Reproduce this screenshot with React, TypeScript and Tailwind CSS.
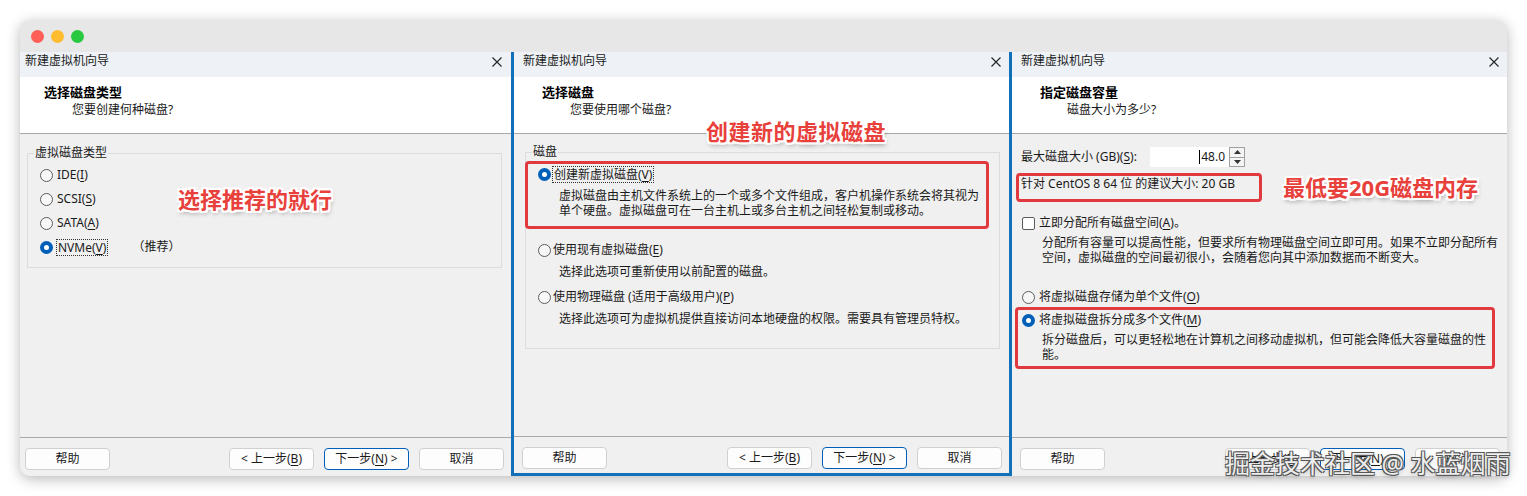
import React from "react";

const annot =
  "absolute whitespace-nowrap font-bold text-[22px] leading-[26px] text-[#e8403b] [text-shadow:-2px_-2px_0_#fff,2px_-2px_0_#fff,-2px_2px_0_#fff,2px_2px_0_#fff,0_2px_0_#fff,0_-2px_0_#fff,2px_0_0_#fff,-2px_0_0_#fff,1px_3px_5px_rgba(0,0,0,0.4)]";

function Radio({ checked }: { checked?: boolean }) {
  return checked ? (
    <span className="flex h-[13px] w-[13px] shrink-0 items-center justify-center rounded-full bg-[#005fb8]">
      <span className="h-[5px] w-[5px] rounded-full bg-white" />
    </span>
  ) : (
    <span className="h-[13px] w-[13px] shrink-0 rounded-full border border-[#5c5c5c] bg-[#f7f7f7]" />
  );
}

function U({ children }: { children: React.ReactNode }) {
  return <span className="underline decoration-1 underline-offset-[2px]">{children}</span>;
}

function Close() {
  return (
    <svg width="10" height="10" viewBox="0 0 10 10" className="shrink-0">
      <path d="M0.5 0.5 L9.5 9.5 M9.5 0.5 L0.5 9.5" stroke="#222" strokeWidth="1.1" fill="none" />
    </svg>
  );
}

function Btn({ children, primary }: { children: React.ReactNode; primary?: boolean }) {
  return (
    <button
      className={
        primary
          ? "flex h-[22px] w-[85px] items-center justify-center rounded-[4px] border border-[#005fb8] bg-[#fdfdfd] text-[12px] leading-none text-[#1a1a1a]"
          : "flex h-[22px] w-[85px] items-center justify-center rounded-[4px] border border-[#d0d0d0] bg-[#fdfdfd] text-[12px] leading-none text-[#1a1a1a]"
      }
    >
      {children}
    </button>
  );
}

function Footer({ className }: { className: string }) {
  return (
    <div className={className}>
      <Btn>帮助</Btn>
      <div className="ml-auto flex gap-[10px]">
        <Btn>
          &lt; 上一步(<U>B</U>)
        </Btn>
        <Btn primary>
          下一步(<U>N</U>) &gt;
        </Btn>
        <Btn>取消</Btn>
      </div>
    </div>
  );
}

function Top({
  headerCls,
  titleCls,
  subCls,
  title,
  subtitle,
}: {
  headerCls: string;
  titleCls: string;
  subCls: string;
  title: string;
  subtitle: string;
}) {
  return (
    <>
      <div className={headerCls}>
        <span className="text-[12px] leading-[16px] text-[#1a1a1a]">新建虚拟机向导</span>
        <Close />
      </div>
      <div className="h-[57px] shrink-0 border-b border-[#a8a8a8] bg-white pt-[6px]">
        <div className={titleCls}>{title}</div>
        <div className={subCls}>{subtitle}</div>
      </div>
    </>
  );
}

export default function App() {
  return (
    <div className="relative h-[496px] w-[1527px] bg-white pl-[20px] pt-[20px] font-['Noto_Sans','Noto_Sans_CJK_SC',sans-serif] text-[12px] text-[#1a1a1a]">
      <div className="flex h-[456px] w-[1487px] flex-col overflow-hidden rounded-[10px] bg-[#e7e7e7] shadow-[0_3px_14px_rgba(0,0,0,0.28)]">
        {/* title bar */}
        <div className="flex h-[32px] shrink-0 items-center gap-[7px] pl-[11px]">
          <span className="h-[13px] w-[13px] rounded-full bg-[#ff5f57]" />
          <span className="h-[13px] w-[13px] rounded-full bg-[#febc2e]" />
          <span className="h-[13px] w-[13px] rounded-full bg-[#28c840]" />
        </div>

        <div className="flex flex-1">
          {/* Panel 1 */}
          <div className="relative flex w-[491px] flex-col bg-[#f0f0f0]">
            <Top
              headerCls="flex h-[25px] shrink-0 items-start justify-between bg-[#eef2f7] pl-[5px] pr-[9px] pt-[1px] [&>svg]:mt-[4px]"
              titleCls="pl-[24px] text-[13px] font-bold leading-[18px] text-black"
              subCls="mt-[1px] pl-[52px] text-[12px] leading-[16px]"
              title="选择磁盘类型"
              subtitle="您要创建何种磁盘?"
            />
            <div className="flex-1 px-[9px] pl-[7px] pt-[11px]">
              <fieldset className="border border-[#dcdcdc] px-0 pb-[8px] pl-[12px]">
                <legend className="-ml-[6px] px-[1px] text-[12px] leading-[16px]">虚拟磁盘类型</legend>
                <div className="pt-[2px]">
                  <div className="flex h-[24px] items-center gap-[4px]">
                    <Radio />
                    <span>
                      IDE(<U>I</U>)
                    </span>
                  </div>
                  <div className="flex h-[24px] items-center gap-[4px]">
                    <Radio />
                    <span>
                      SCSI(<U>S</U>)
                    </span>
                  </div>
                  <div className="flex h-[24px] items-center gap-[4px]">
                    <Radio />
                    <span>
                      SATA(<U>A</U>)
                    </span>
                  </div>
                  <div className="flex h-[24px] items-center gap-[3px]">
                    <Radio checked />
                    <span className="border border-dotted border-[#333] px-[1px] leading-[15px]">
                      NVMe(<U>V</U>)
                    </span>
                    <span className="ml-[21px]">（推荐）</span>
                  </div>
                </div>
              </fieldset>
            </div>
            <Footer className="flex h-[39px] shrink-0 items-start border-t border-[#a8a8a8] pl-[5px] pr-[7px] pt-[10px]" />
            <div className={`${annot} left-[158px] top-[134px]`}>选择推荐的就行</div>
          </div>

          {/* Panel 2 */}
          <div className="relative flex w-[501px] flex-col border-x-[3px] border-b-[3px] border-[#1170b8] bg-[#f0f0f0]">
            <Top
              headerCls="flex h-[25px] shrink-0 items-start justify-between bg-[#eef2f7] pl-[9px] pr-[8px] pt-[1px] [&>svg]:mt-[4px]"
              titleCls="pl-[28px] text-[13px] font-bold leading-[18px] text-black"
              subCls="mt-[1px] pl-[56px] text-[12px] leading-[16px]"
              title="选择磁盘"
              subtitle="您要使用哪个磁盘?"
            />
            <div className="flex-1 pl-[11px] pr-[9px] pt-[10px]">
              <fieldset className="border border-[#dcdcdc] px-0 pb-[22px]">
                <legend className="ml-[6px] px-[1px] text-[12px] leading-[16px]">磁盘</legend>
                <div className="-ml-[1px] mr-[10px] mt-[1px] rounded-[4px] border-[3px] border-[#e0393e] pb-[8px] pl-[10px]">
                  <div className="flex h-[20px] items-center gap-[1px]">
                    <Radio checked />
                    <span className="border border-dotted border-[#333] px-[1px] leading-[15px]">
                      创建新虚拟磁盘(<U>V</U>)
                    </span>
                  </div>
                  <div className="mt-[4px] whitespace-nowrap pl-[21px] leading-[15px]">
                    虚拟磁盘由主机文件系统上的一个或多个文件组成，客户机操作系统会将其视为
                    <br />
                    单个硬盘。虚拟磁盘可在一台主机上或多台主机之间轻松复制或移动。
                  </div>
                </div>
                <div className="pl-[12px]">
                  <div className="mt-[11px] flex h-[20px] items-center gap-[2px]">
                    <Radio />
                    <span>
                      使用现有虚拟磁盘(<U>E</U>)
                    </span>
                  </div>
                  <div className="mt-[4px] pl-[21px] leading-[15px]">选择此选项可重新使用以前配置的磁盘。</div>
                  <div className="mt-[8px] flex h-[20px] items-center gap-[2px]">
                    <Radio />
                    <span>
                      使用物理磁盘 (适用于高级用户)(<U>P</U>)
                    </span>
                  </div>
                  <div className="mt-[4px] pl-[21px] leading-[15px]">
                    选择此选项可为虚拟机提供直接访问本地硬盘的权限。需要具有管理员特权。
                  </div>
                </div>
              </fieldset>
            </div>
            <Footer className="flex h-[37px] shrink-0 items-start border-t border-[#a8a8a8] pl-[8px] pr-[7px] pt-[10px]" />
            <div className={`${annot} left-[192px] top-[66px] tracking-[0.5px]`}>创建新的虚拟磁盘</div>
          </div>

          {/* Panel 3 */}
          <div className="relative flex w-[495px] flex-col bg-[#f0f0f0]">
            <Top
              headerCls="flex h-[25px] shrink-0 items-start justify-between bg-[#eef2f7] pl-[9px] pr-[8px] pt-[1px] [&>svg]:mt-[4px]"
              titleCls="pl-[28px] text-[13px] font-bold leading-[18px] text-black"
              subCls="mt-[1px] pl-[55px] text-[12px] leading-[16px]"
              title="指定磁盘容量"
              subtitle="磁盘大小为多少?"
            />
            <div className="flex-1 pt-[13px]">
              <div className="flex h-[20px] items-center pl-[9px]">
                <span className="w-[129px] whitespace-nowrap">
                  最大磁盘大小 (GB)(<U>S</U>):
                </span>
                <div className="flex h-[20px] w-[79px] items-center justify-end bg-white pr-[4px]">
                  <span className="mr-[1px] h-[14px] w-px bg-black" />
                  <span>48.0</span>
                </div>
                <div className="flex h-[20px] w-[16px] flex-col border border-[#a0a0a0] bg-[#f4f4f4]">
                  <div className="flex flex-1 items-center justify-center border-b border-[#a0a0a0]">
                    <svg width="7" height="4" viewBox="0 0 7 4">
                      <path d="M0 4 L3.5 0 L7 4 Z" fill="#333" />
                    </svg>
                  </div>
                  <div className="flex flex-1 items-center justify-center">
                    <svg width="7" height="4" viewBox="0 0 7 4">
                      <path d="M0 0 L3.5 4 L7 0 Z" fill="#333" />
                    </svg>
                  </div>
                </div>
              </div>
              <div className="ml-[4px] mt-[6px] h-[29px] w-[246px] rounded-[4px] border-[3px] border-[#e0393e] pl-[2px] leading-[16px]">
                针对 CentOS 8 64 位 的建议大小: 20 GB
              </div>
              <div className="mt-[11px] flex h-[20px] items-center gap-[4px] pl-[10px]">
                <span className="h-[13px] w-[13px] rounded-[2px] border border-[#5c5c5c] bg-white" />
                <span>
                  立即分配所有磁盘空间(<U>A</U>)。
                </span>
              </div>
              <div className="mt-[2px] whitespace-nowrap pl-[30px] leading-[15px]">
                分配所有容量可以提高性能，但要求所有物理磁盘空间立即可用。如果不立即分配所有
                <br />
                空间，虚拟磁盘的空间最初很小，会随着您向其中添加数据而不断变大。
              </div>
              <div className="mt-[22px] flex h-[20px] items-center gap-[4px] pl-[10px]">
                <Radio />
                <span>
                  将虚拟磁盘存储为单个文件(<U>O</U>)
                </span>
              </div>
              <div className="ml-[3px] w-[480px] rounded-[4px] border-[3px] border-[#e0393e] pb-[4px] pl-[4px]">
                <div className="flex h-[20px] items-center gap-[4px]">
                  <Radio checked />
                  <span>
                    将虚拟磁盘拆分成多个文件(<U>M</U>)
                  </span>
                </div>
                <div className="mt-[2px] whitespace-nowrap pl-[20px] leading-[15px]">
                  拆分磁盘后，可以更轻松地在计算机之间移动虚拟机，但可能会降低大容量磁盘的性
                  <br />
                  能。
                </div>
              </div>
            </div>
            <Footer className="flex h-[39px] shrink-0 items-start border-t border-[#a8a8a8] pl-[8px] pr-[7px] pt-[10px]" />
            <div className={`${annot} left-[271px] top-[122px]`}>最低要20G磁盘内存</div>
          </div>
        </div>
      </div>

      <div className="absolute left-[1225px] top-[448px] whitespace-nowrap text-[25px] leading-[30px] text-white/90 [text-shadow:-1px_-1px_0_#555,1px_-1px_0_#555,-1px_1px_0_#555,1px_1px_0_#555,0_2px_4px_rgba(0,0,0,0.3)]">
        掘金技术社区 @ 水蓝烟雨
      </div>
    </div>
  );
}
